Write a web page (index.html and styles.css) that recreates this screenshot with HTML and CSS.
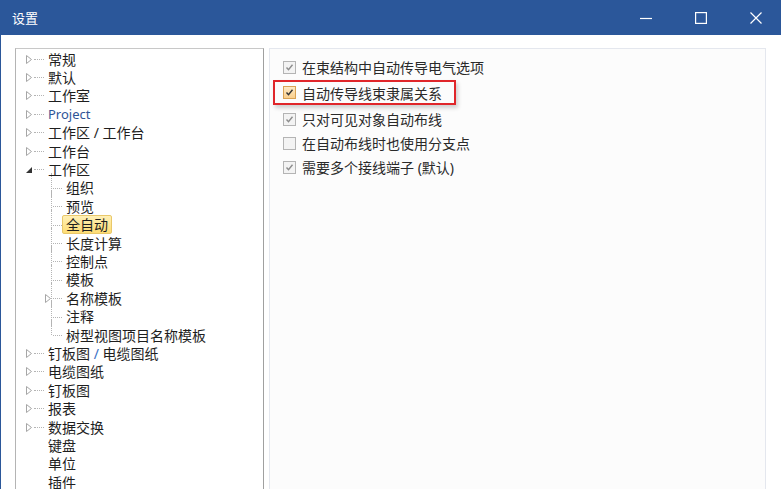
FILE: index.html
```html
<!DOCTYPE html>
<html lang="zh-CN">
<head>
  <meta charset="UTF-8" />
  <title>设置</title>
  <link rel="stylesheet" href="styles.css">
</head>
<body>

<div class="window">
  <header class="titlebar">
    <span class="title">设置</span>
    <div class="controls">
      <span class="ctl"><svg width="12" height="12" viewBox="0 0 12 12"><path d="M0 6.5h12" stroke="#fff" stroke-width="1.2"/></svg></span>
      <span class="ctl"><svg width="12" height="12" viewBox="0 0 12 12"><rect x="0.6" y="0.6" width="10.8" height="10.8" fill="none" stroke="#fff" stroke-width="1.2"/></svg></span>
      <span class="ctl"><svg width="12" height="12" viewBox="0 0 12 12"><path d="M0.5 0.5l11 11M11.5 0.5l-11 11" stroke="#fff" stroke-width="1.2"/></svg></span>
    </div>
  </header>

  <div class="content">
    <div class="tree">
      <ul class="nodes">
        <li class="node"><span class="exp"><svg width="6" height="9" viewBox="0 0 6 9"><path d="M0.5 0.5v8l5-4z" fill="#fff" stroke="#a6a6a6"/></svg></span><span class="dash"></span><span class="label">常规</span></li>
        <li class="node"><span class="exp"><svg width="6" height="9" viewBox="0 0 6 9"><path d="M0.5 0.5v8l5-4z" fill="#fff" stroke="#a6a6a6"/></svg></span><span class="dash"></span><span class="label">默认</span></li>
        <li class="node"><span class="exp"><svg width="6" height="9" viewBox="0 0 6 9"><path d="M0.5 0.5v8l5-4z" fill="#fff" stroke="#a6a6a6"/></svg></span><span class="dash"></span><span class="label">工作室</span></li>
        <li class="node"><span class="exp"><svg width="6" height="9" viewBox="0 0 6 9"><path d="M0.5 0.5v8l5-4z" fill="#fff" stroke="#a6a6a6"/></svg></span><span class="dash"></span><span class="label latin">Project</span></li>
        <li class="node"><span class="exp"><svg width="6" height="9" viewBox="0 0 6 9"><path d="M0.5 0.5v8l5-4z" fill="#fff" stroke="#a6a6a6"/></svg></span><span class="dash"></span><span class="label">工作区 / 工作台</span></li>
        <li class="node"><span class="exp"><svg width="6" height="9" viewBox="0 0 6 9"><path d="M0.5 0.5v8l5-4z" fill="#fff" stroke="#a6a6a6"/></svg></span><span class="dash"></span><span class="label">工作台</span></li>
        <li class="node"><span class="exp"><svg width="6" height="9" viewBox="0 0 6 9"><path d="M6 2v6H0z" fill="#333"/></svg></span><span class="dash"></span><span class="label">工作区</span></li>
        <li>
          <ul class="sub">
            <li class="leaf"><span class="label">组织</span></li>
            <li class="leaf"><span class="label">预览</span></li>
            <li class="leaf"><span class="label current">全自动</span></li>
            <li class="leaf"><span class="label">长度计算</span></li>
            <li class="leaf"><span class="label">控制点</span></li>
            <li class="leaf"><span class="label">模板</span></li>
            <li class="leaf"><span class="exp sub-exp"><svg width="6" height="9" viewBox="0 0 6 9"><path d="M0.5 0.5v8l5-4z" fill="#fff" stroke="#a6a6a6"/></svg></span><span class="label">名称模板</span></li>
            <li class="leaf"><span class="label">注释</span></li>
            <li class="leaf"><span class="label">树型视图项目名称模板</span></li>
          </ul>
        </li>
        <li class="node"><span class="exp"><svg width="6" height="9" viewBox="0 0 6 9"><path d="M0.5 0.5v8l5-4z" fill="#fff" stroke="#a6a6a6"/></svg></span><span class="dash"></span><span class="label">钉板图 <span class="slash">/</span> 电缆图纸</span></li>
        <li class="node"><span class="exp"><svg width="6" height="9" viewBox="0 0 6 9"><path d="M0.5 0.5v8l5-4z" fill="#fff" stroke="#a6a6a6"/></svg></span><span class="dash"></span><span class="label">电缆图纸</span></li>
        <li class="node"><span class="exp"><svg width="6" height="9" viewBox="0 0 6 9"><path d="M0.5 0.5v8l5-4z" fill="#fff" stroke="#a6a6a6"/></svg></span><span class="dash"></span><span class="label">钉板图</span></li>
        <li class="node"><span class="exp"><svg width="6" height="9" viewBox="0 0 6 9"><path d="M0.5 0.5v8l5-4z" fill="#fff" stroke="#a6a6a6"/></svg></span><span class="dash"></span><span class="label">报表</span></li>
        <li class="node"><span class="exp"><svg width="6" height="9" viewBox="0 0 6 9"><path d="M0.5 0.5v8l5-4z" fill="#fff" stroke="#a6a6a6"/></svg></span><span class="dash"></span><span class="label">数据交换</span></li>
        <li class="node plain"><span class="label">键盘</span></li>
        <li class="node plain"><span class="label">单位</span></li>
        <li class="node plain"><span class="label">插件</span></li>
      </ul>
    </div>

    <div class="panel">
      <div class="opt">
        <span class="box dis"><svg width="9" height="9" viewBox="0 0 9 9"><path d="M1.5 4.5l2 2.2 4-5" fill="none" stroke="#8c8c8c" stroke-width="1.4"/></svg></span>
        <span>在束结构中自动传导电气选项</span>
      </div>
      <div class="opt marked">
        <span class="box on"><svg width="9" height="9" viewBox="0 0 9 9"><path d="M1.5 4.5l2 2.2 4-5" fill="none" stroke="#333" stroke-width="1.4"/></svg></span>
        <span>自动传导线束隶属关系</span>
      </div>
      <div class="opt">
        <span class="box dis"><svg width="9" height="9" viewBox="0 0 9 9"><path d="M1.5 4.5l2 2.2 4-5" fill="none" stroke="#8c8c8c" stroke-width="1.4"/></svg></span>
        <span>只对可见对象自动布线</span>
      </div>
      <div class="opt">
        <span class="box dis"></span>
        <span>在自动布线时也使用分支点</span>
      </div>
      <div class="opt">
        <span class="box dis"><svg width="9" height="9" viewBox="0 0 9 9"><path d="M1.5 4.5l2 2.2 4-5" fill="none" stroke="#8c8c8c" stroke-width="1.4"/></svg></span>
        <span>需要多个接线端子 (默认)</span>
      </div>
    </div>
  </div>
</div>

</body>
</html>
```

FILE: styles.css
```css
html, body {
  margin: 0;
  height: 100%;
  overflow: hidden;
}
body {
  font-family: "Noto Sans", "Noto Sans CJK SC", sans-serif;
  font-size: 14px;
  color: #1e1e1e;
  background: #fff;
}
.window {
  display: flex;
  flex-direction: column;
  height: 100%;
}
.titlebar {
  height: 35px;
  flex: none;
  background: #2b579a;
  color: #fff;
  display: flex;
  align-items: center;
  justify-content: space-between;
}
.title {
  padding-left: 12px;
  font-size: 13px;
  font-family: "Noto Sans CJK SC", sans-serif;
}
.controls {
  display: flex;
  margin-right: -2px;
}
.ctl {
  width: 55px;
  height: 35px;
  display: flex;
  align-items: center;
  justify-content: center;
}

/* 主体 */
.content {
  flex: 1;
  display: flex;
  gap: 5px;
  padding: 13px 0 0 14px;
  border-left: 1px solid #2b579a;
  min-height: 0;
}
.tree {
  width: 247px;
  height: 470px;
  flex: none;
  border: 1px solid #b4b4b4;
  border-top-color: #c8c8c8;
  border-right-color: #a0a0a0;
  background: #fff;
}
.panel {
  width: 497px;
  height: 470px;
  flex: none;
  border: 1px solid #e4e7ee;
  background: #fcfcfc;
  padding: 6px 0 0 13px;
  box-sizing: border-box;
  color: #2a2a2a;
}

/* 树 */
ul {
  list-style: none;
  margin: 0;
  padding: 0;
}
.nodes {
  padding-top: 1px;
}
.node {
  display: flex;
  align-items: center;
  height: 18.4px;
  padding-left: 10px;
}
.node.plain {
  padding-left: 28px;
}
.exp {
  width: 6px;
  height: 9px;
  display: flex;
  margin-right: 2px;
}
.dash {
  width: 10px;
  border-top: 1px dotted #b4b4b4;
}
.label {
  display: inline-block;
  padding: 0 3px;
  border: 1px solid transparent;
  border-radius: 2px;
  line-height: 17px;
  white-space: nowrap;
}
.label.latin {
  color: #2f5597;
  font-size: 13px;
}
.slash {
  color: #3b6fc4;
}
.label.current {
  background: linear-gradient(#fff0b6, #fddc74);
  border-color: #e9c86a;
}
.sub {
  margin-left: 35px;
}
.leaf {
  position: relative;
  display: flex;
  align-items: center;
  height: 18.4px;
  padding-left: 11px;
}
.leaf::before {
  content: "";
  position: absolute;
  left: 0;
  top: -6px;
  bottom: 0;
  border-left: 1px dotted #b4b4b4;
}
.leaf:last-child::before {
  bottom: 50%;
}
.leaf::after {
  content: "";
  position: absolute;
  left: 2px;
  width: 9px;
  top: 50%;
  border-top: 1px dotted #b4b4b4;
}
.sub-exp {
  position: absolute;
  left: -6px;
  top: 5px;
  background: #fff;
  z-index: 1;
}

/* 选项 */
.opt {
  display: flex;
  align-items: center;
  gap: 6px;
  height: 24px;
  white-space: nowrap;
}
.opt.marked {
  height: 21px;
  margin: 1px 0 2px -10px;
  padding: 0 12px 0 8px;
  border: 2px solid #e0262a;
  width: max-content;
  box-shadow: 2px 3px 4px rgba(0, 0, 0, 0.18);
}
.box {
  width: 13px;
  height: 13px;
  box-sizing: border-box;
  border: 1px solid #b4b4b4;
  background: #f3f3f3;
  display: flex;
  align-items: center;
  justify-content: center;
  flex: none;
}
.box.on {
  border-color: #d9a253;
  background: linear-gradient(#fde9c4, #f9cf8e);
}
```
